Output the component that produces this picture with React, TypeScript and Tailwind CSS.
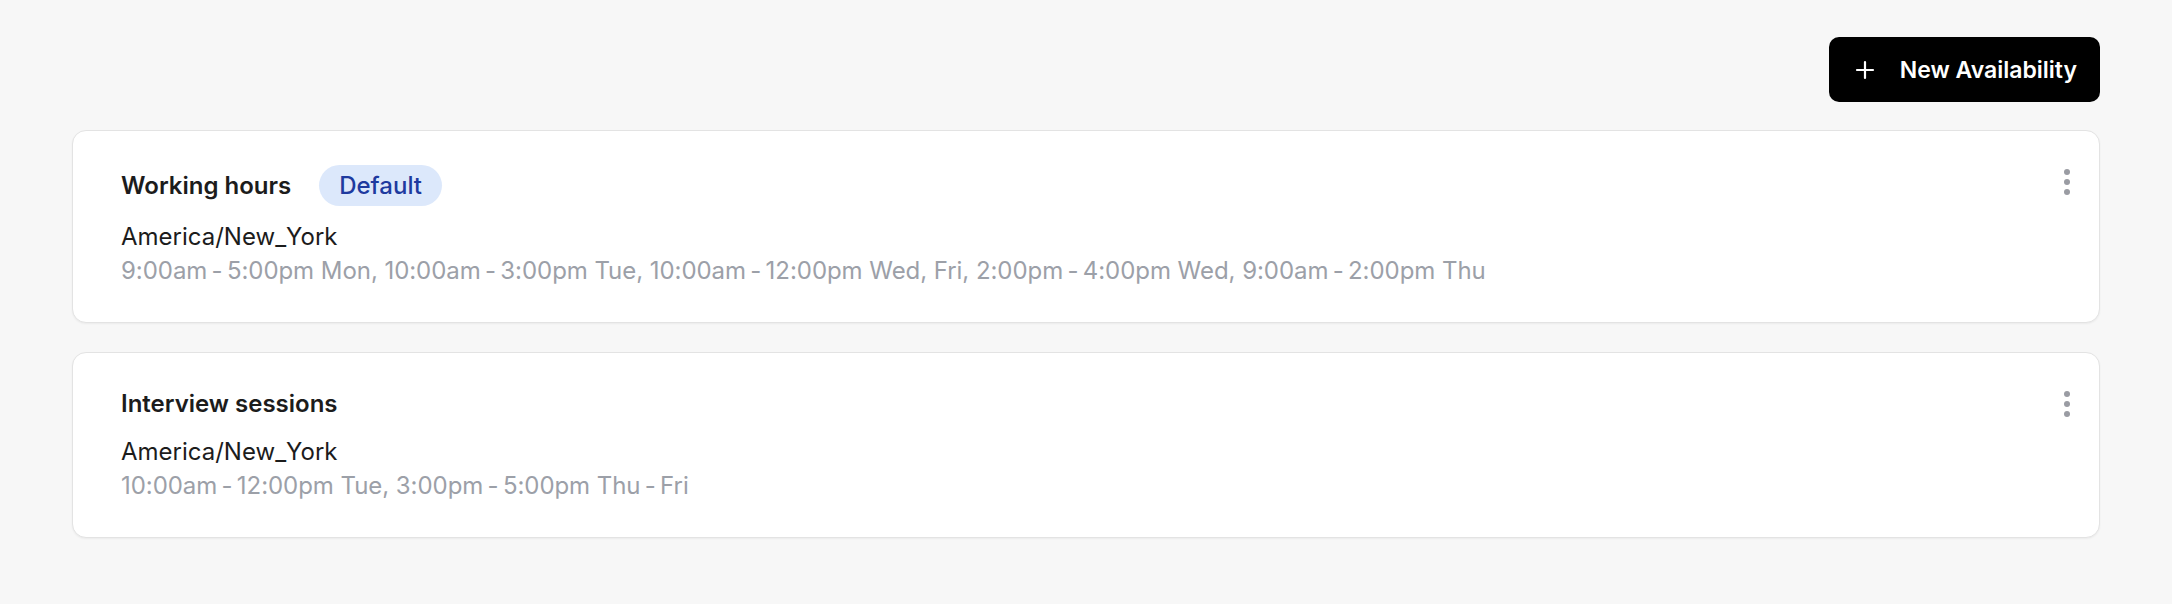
const schedules = [
  {
    name: "Working hours",
    isDefault: true,
    timezone: "America/New_York",
    hours: "9:00am - 5:00pm Mon, 10:00am - 3:00pm Tue, 10:00am - 12:00pm Wed, Fri, 2:00pm - 4:00pm Wed, 9:00am - 2:00pm Thu",
  },
  {
    name: "Interview sessions",
    isDefault: false,
    timezone: "America/New_York",
    hours: "10:00am - 12:00pm Tue, 3:00pm - 5:00pm Thu - Fri",
  },
]

function Kebab() {
  return (
    <button className="flex h-[34px] w-[24px] flex-col items-center justify-center gap-[4px]">
      <span className="h-[6px] w-[6px] rounded-full bg-[#9a9ca3]" />
      <span className="h-[6px] w-[6px] rounded-full bg-[#9a9ca3]" />
      <span className="h-[6px] w-[6px] rounded-full bg-[#9a9ca3]" />
    </button>
  )
}

function formatHours(text: string) {
  // tighter dash spacing like the original
  return text.split(" - ").join("\u2009-\u2009")
}

export default function App() {
  return (
    <div className="min-h-screen bg-[#f7f7f7] px-[72px] pt-[37px] pb-[40px] font-['Inter',sans-serif] text-[24px] leading-[34px]">
      <div className="flex justify-end">
        <button className="flex h-[65px] items-center gap-[25px] rounded-[10px] bg-black pl-[26px] pr-[23px] text-[23px] font-semibold text-white">
          <svg width="20" height="20" viewBox="0 0 20 20" fill="none" stroke="white" strokeWidth="2.2" strokeLinecap="round">
            <path d="M10 2v16M2 10h16" />
          </svg>
          <span>New Availability</span>
        </button>
      </div>

      <div className="mt-[28px] flex flex-col gap-[29px]">
        {schedules.map((s) => (
          <div key={s.name} className="flex items-start justify-between rounded-[14px] border border-[#e3e3e3] bg-white pt-[34px] pb-[34px] pl-[48px] pr-[20px] shadow-[0_1px_2px_rgba(0,0,0,0.05)]">
            <div>
              <div className="flex items-center gap-[28px]">
                <span className="font-semibold text-[#1c1c1c]">{s.name}</span>
                {s.isDefault && (
                  <span className="flex h-[41px] items-center rounded-full bg-[#dce8fb] px-[20px] font-medium text-[#1e3a9f]">Default</span>
                )}
              </div>
              <div className="mt-[14px] text-[#1c1c1c]">{s.timezone}</div>
              <div className="tracking-[-0.05px] text-[#9ca0a8]">{formatHours(s.hours)}</div>
            </div>
            <Kebab />
          </div>
        ))}
      </div>
    </div>
  )
}
